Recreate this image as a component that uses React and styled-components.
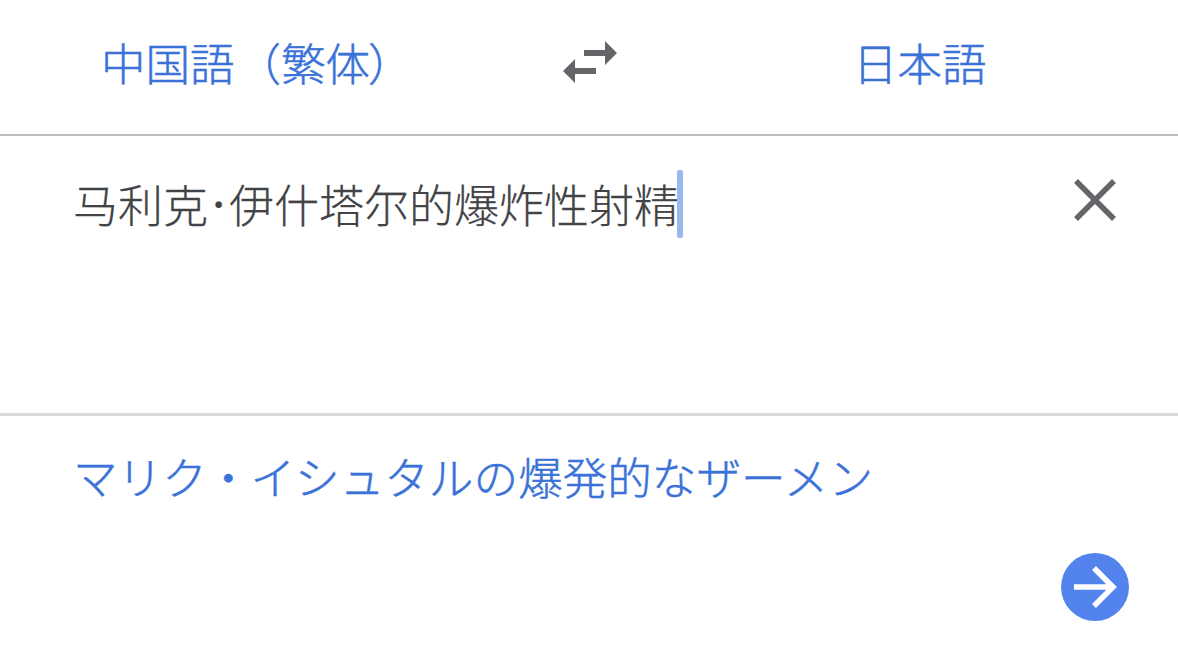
import React from "react";
import styled, { createGlobalStyle } from "styled-components";

const GlobalStyle = createGlobalStyle`
  * {
    box-sizing: border-box;
  }

  body {
    margin: 0;
    background-color: #ffffff;
    font-family: "Noto Sans CJK JP", sans-serif;
    font-weight: 300;
  }
`;

const Page = styled.div`
  display: flex;
  flex-direction: column;
  height: 663px;
  overflow: hidden;
`;

const LanguageBar = styled.header`
  display: grid;
  grid-template-columns: 490px 200px 1fr;
  align-items: center;
  height: 136px;
  padding-bottom: 11px;
  border-bottom: 2px solid #bdbdbd;
`;

const Language = styled.div`
  padding-left: ${({ $indent }) => $indent}px;
  color: #3a72d8;
  font-size: 44.5px;
  line-height: 64px;
  white-space: nowrap;
  -webkit-text-stroke: 0.5px currentColor;
`;

const Variant = styled.span`
  margin-left: 2px;
`;

const ClosingBracket = styled.span`
  margin-left: -2px;
`;

const SwapIcon = styled.svg`
  justify-self: center;
`;

const Source = styled.section`
  display: flex;
  justify-content: space-between;
  height: 280px;
  padding: 34px 62px 0 73px;
  border-bottom: 3px solid #dadadd;
`;

const SourceText = styled.div`
  display: flex;
  height: 68px;
  color: #414346;
  font-family: "Noto Sans CJK SC", sans-serif;
  font-size: 45px;
  line-height: 67px;
  white-space: nowrap;
  -webkit-text-stroke: 0.25px currentColor;
`;

const Dot = styled.span`
  display: flex;
  justify-content: center;
  width: 21px;
  font-family: "Noto Sans", sans-serif;
  font-weight: 500;
`;

const Caret = styled.span`
  width: 6px;
  height: 68px;
  margin-left: -2px;
  border-radius: 2px;
  background-color: #99b9ec;
`;

const ClearIcon = styled.svg`
  margin-top: 9px;
`;

const Result = styled.section`
  display: flex;
  flex: 1;
  flex-direction: column;
  justify-content: space-between;
  padding: 26px 49px 42px 73px;
`;

const ResultText = styled.div`
  color: #3a72d8;
  font-size: 44.6px;
  line-height: 68px;
  white-space: nowrap;
  -webkit-text-stroke: 0.5px currentColor;
`;

const GoButton = styled.div`
  display: flex;
  align-self: flex-end;
  width: 68px;
  height: 68px;
  border-radius: 50%;
  background-color: #5383ec;
`;

function App() {
  return (
    <Page>
      <GlobalStyle />
      <LanguageBar>
        <Language $indent={101}>
          中国語
          <Variant>
            （繁体<ClosingBracket>）</ClosingBracket>
          </Variant>
        </Language>
        <SwapIcon width="54" height="42" viewBox="0 0 54 42" fill="#636569">
          <path d="M42 0 54 12 42 24V15H21V9H42zM12 18V27H33V33H12V42L0 30z" />
        </SwapIcon>
        <Language $indent={163}>日本語</Language>
      </LanguageBar>
      <Source>
        <SourceText>
          马利克<Dot>·</Dot>伊什塔尔的爆炸性射精
          <Caret />
        </SourceText>
        <ClearIcon width="42" height="42" viewBox="0 0 42 42" stroke="#636569" strokeWidth="5.5">
          <path d="M2 2 40 40M40 2 2 40" />
        </ClearIcon>
      </Source>
      <Result>
        <ResultText>マリク・イシュタルの爆発的なザーメン</ResultText>
        <GoButton>
          <svg width="68" height="68" viewBox="0 0 68 68" fill="none" stroke="#ffffff" strokeWidth="5.5">
            <path d="M13 34H52M33 15 52 34 33 53" />
          </svg>
        </GoButton>
      </Result>
    </Page>
  );
}

export default App;
